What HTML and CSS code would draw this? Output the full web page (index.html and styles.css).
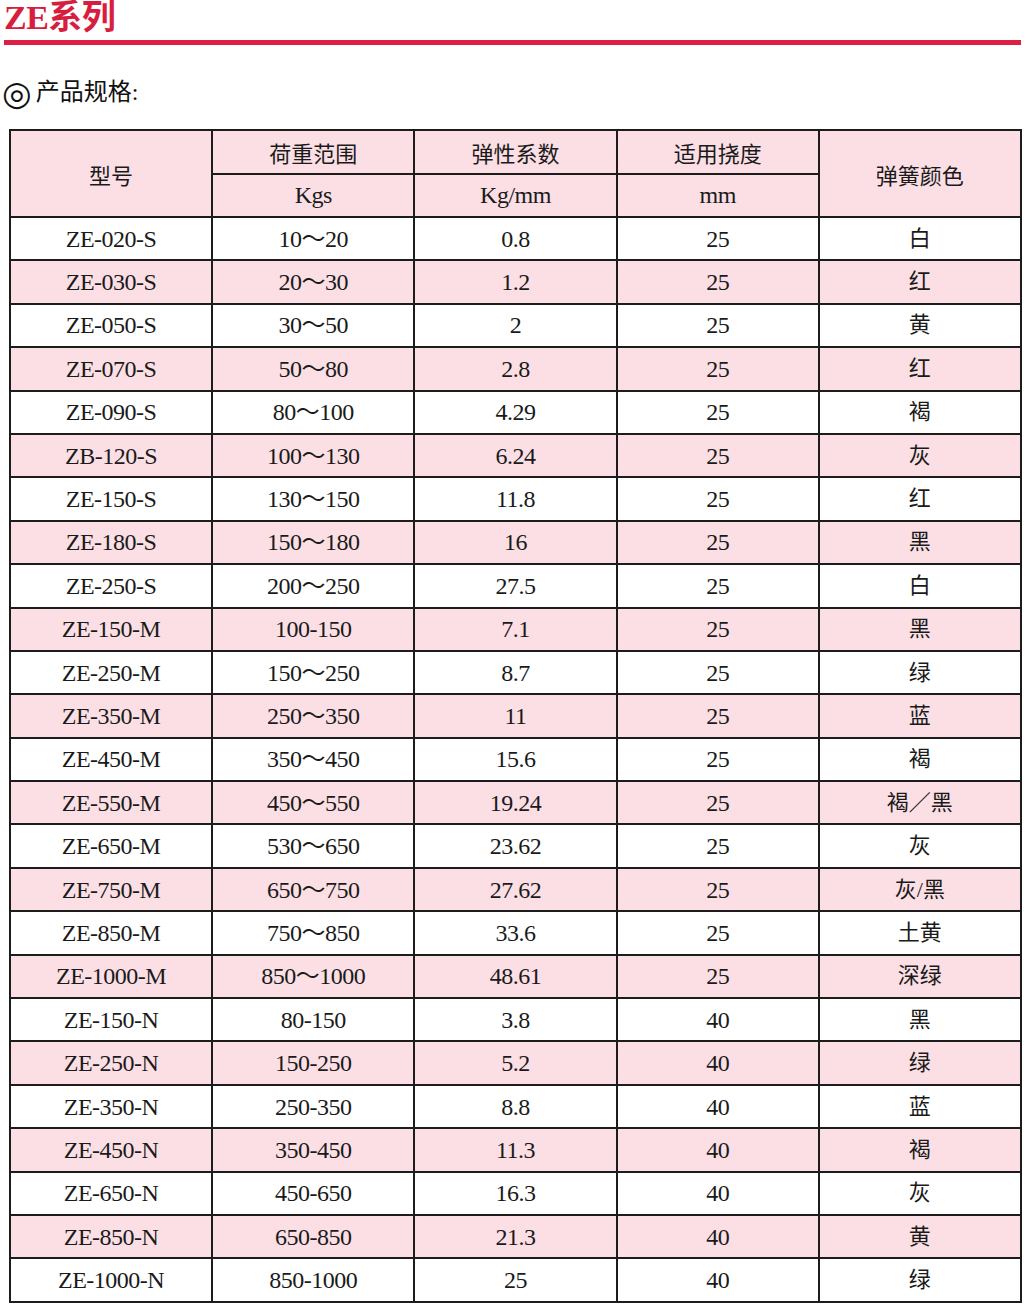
FILE: index.html
```html
<!DOCTYPE html>
<html lang="zh">
<head>
<meta charset="utf-8">
<title>ZE系列</title>
<link rel="stylesheet" href="styles.css">
</head>
<body>
<div class="page">
  <h1 class="title">ZE系列</h1>
  <div class="rule"></div>
  <div class="subtitle"><span class="mark">◎</span>产品规格:</div>
  <table class="spec">
    <thead>
      <tr class="h1">
        <th rowspan="2">型号</th>
        <th>荷重范围</th>
        <th>弹性系数</th>
        <th>适用挠度</th>
        <th rowspan="2">弹簧颜色</th>
      </tr>
      <tr class="h2">
        <th class="unit">Kgs</th>
        <th class="unit">Kg/mm</th>
        <th class="unit">mm</th>
      </tr>
    </thead>
    <tbody>
      <tr><td>ZE-020-S</td><td>10～20</td><td>0.8</td><td>25</td><td>白</td></tr>
      <tr><td>ZE-030-S</td><td>20～30</td><td>1.2</td><td>25</td><td>红</td></tr>
      <tr><td>ZE-050-S</td><td>30～50</td><td>2</td><td>25</td><td>黄</td></tr>
      <tr><td>ZE-070-S</td><td>50～80</td><td>2.8</td><td>25</td><td>红</td></tr>
      <tr><td>ZE-090-S</td><td>80～100</td><td>4.29</td><td>25</td><td>褐</td></tr>
      <tr><td>ZB-120-S</td><td>100～130</td><td>6.24</td><td>25</td><td>灰</td></tr>
      <tr><td>ZE-150-S</td><td>130～150</td><td>11.8</td><td>25</td><td>红</td></tr>
      <tr><td>ZE-180-S</td><td>150～180</td><td>16</td><td>25</td><td>黑</td></tr>
      <tr><td>ZE-250-S</td><td>200～250</td><td>27.5</td><td>25</td><td>白</td></tr>
      <tr><td>ZE-150-M</td><td>100-150</td><td>7.1</td><td>25</td><td>黑</td></tr>
      <tr><td>ZE-250-M</td><td>150～250</td><td>8.7</td><td>25</td><td>绿</td></tr>
      <tr><td>ZE-350-M</td><td>250～350</td><td>11</td><td>25</td><td>蓝</td></tr>
      <tr><td>ZE-450-M</td><td>350～450</td><td>15.6</td><td>25</td><td>褐</td></tr>
      <tr><td>ZE-550-M</td><td>450～550</td><td>19.24</td><td>25</td><td>褐／黑</td></tr>
      <tr><td>ZE-650-M</td><td>530～650</td><td>23.62</td><td>25</td><td>灰</td></tr>
      <tr><td>ZE-750-M</td><td>650～750</td><td>27.62</td><td>25</td><td>灰/黑</td></tr>
      <tr><td>ZE-850-M</td><td>750～850</td><td>33.6</td><td>25</td><td>土黄</td></tr>
      <tr><td>ZE-1000-M</td><td>850～1000</td><td>48.61</td><td>25</td><td>深绿</td></tr>
      <tr><td>ZE-150-N</td><td>80-150</td><td>3.8</td><td>40</td><td>黑</td></tr>
      <tr><td>ZE-250-N</td><td>150-250</td><td>5.2</td><td>40</td><td>绿</td></tr>
      <tr><td>ZE-350-N</td><td>250-350</td><td>8.8</td><td>40</td><td>蓝</td></tr>
      <tr><td>ZE-450-N</td><td>350-450</td><td>11.3</td><td>40</td><td>褐</td></tr>
      <tr><td>ZE-650-N</td><td>450-650</td><td>16.3</td><td>40</td><td>灰</td></tr>
      <tr><td>ZE-850-N</td><td>650-850</td><td>21.3</td><td>40</td><td>黄</td></tr>
      <tr><td>ZE-1000-N</td><td>850-1000</td><td>25</td><td>40</td><td>绿</td></tr>
    </tbody>
  </table>
</div>
</body>
</html>
```

FILE: styles.css
```css
html, body {
  margin: 0;
  padding: 0;
  background: #ffffff;
}

body {
  font-family: "Liberation Serif", "Noto Sans CJK SC", serif;
  color: #1a1a1a;
}

.page {
  width: 1030px;
}

.title {
  margin: 0;
  padding-left: 4px;
  height: 40px;
  font-size: 34px;
  line-height: 36px;
  font-weight: 700;
  color: #d81e3f;
  letter-spacing: -0.5px;
}

.rule {
  margin-left: 4px;
  width: 1017px;
  height: 5px;
  background: #dc1f43;
}

.subtitle {
  margin-top: 30px;
  padding-left: 2px;
  height: 34px;
  display: flex;
  align-items: center;
  font-size: 24px;
  line-height: 34px;
  color: #111;
}

.mark {
  font-family: "DejaVu Sans", sans-serif;
  font-size: 34px;
  margin-right: 4px;
  line-height: 1;
  position: relative;
  top: 1px;
}

.spec {
  margin-top: 20px;
  margin-left: 9px;
  width: 1013px;
  border-collapse: collapse;
  table-layout: fixed;
  font-size: 24px;
}

.spec th,
.spec td {
  border: 2px solid #1c1c1c;
  text-align: center;
  vertical-align: middle;
  padding: 0;
  font-weight: 400;
  color: #1a1a1a;
}

.spec th {
  font-size: 22px;
}

.spec th.unit {
  font-size: 24px;
  letter-spacing: -0.5px;
}

.spec thead th {
  background: #fbdfe5;
}

.spec .h1 th {
  height: 42px;
}

.spec .h2 th {
  height: 41px;
}

.spec td {
  height: 41.4px;
  line-height: 24px;
  letter-spacing: -0.5px;
}

.spec td:last-child {
  font-size: 22px;
  letter-spacing: 0;
}

.spec tbody tr:nth-child(even) td {
  background: #fbdfe5;
}
```
